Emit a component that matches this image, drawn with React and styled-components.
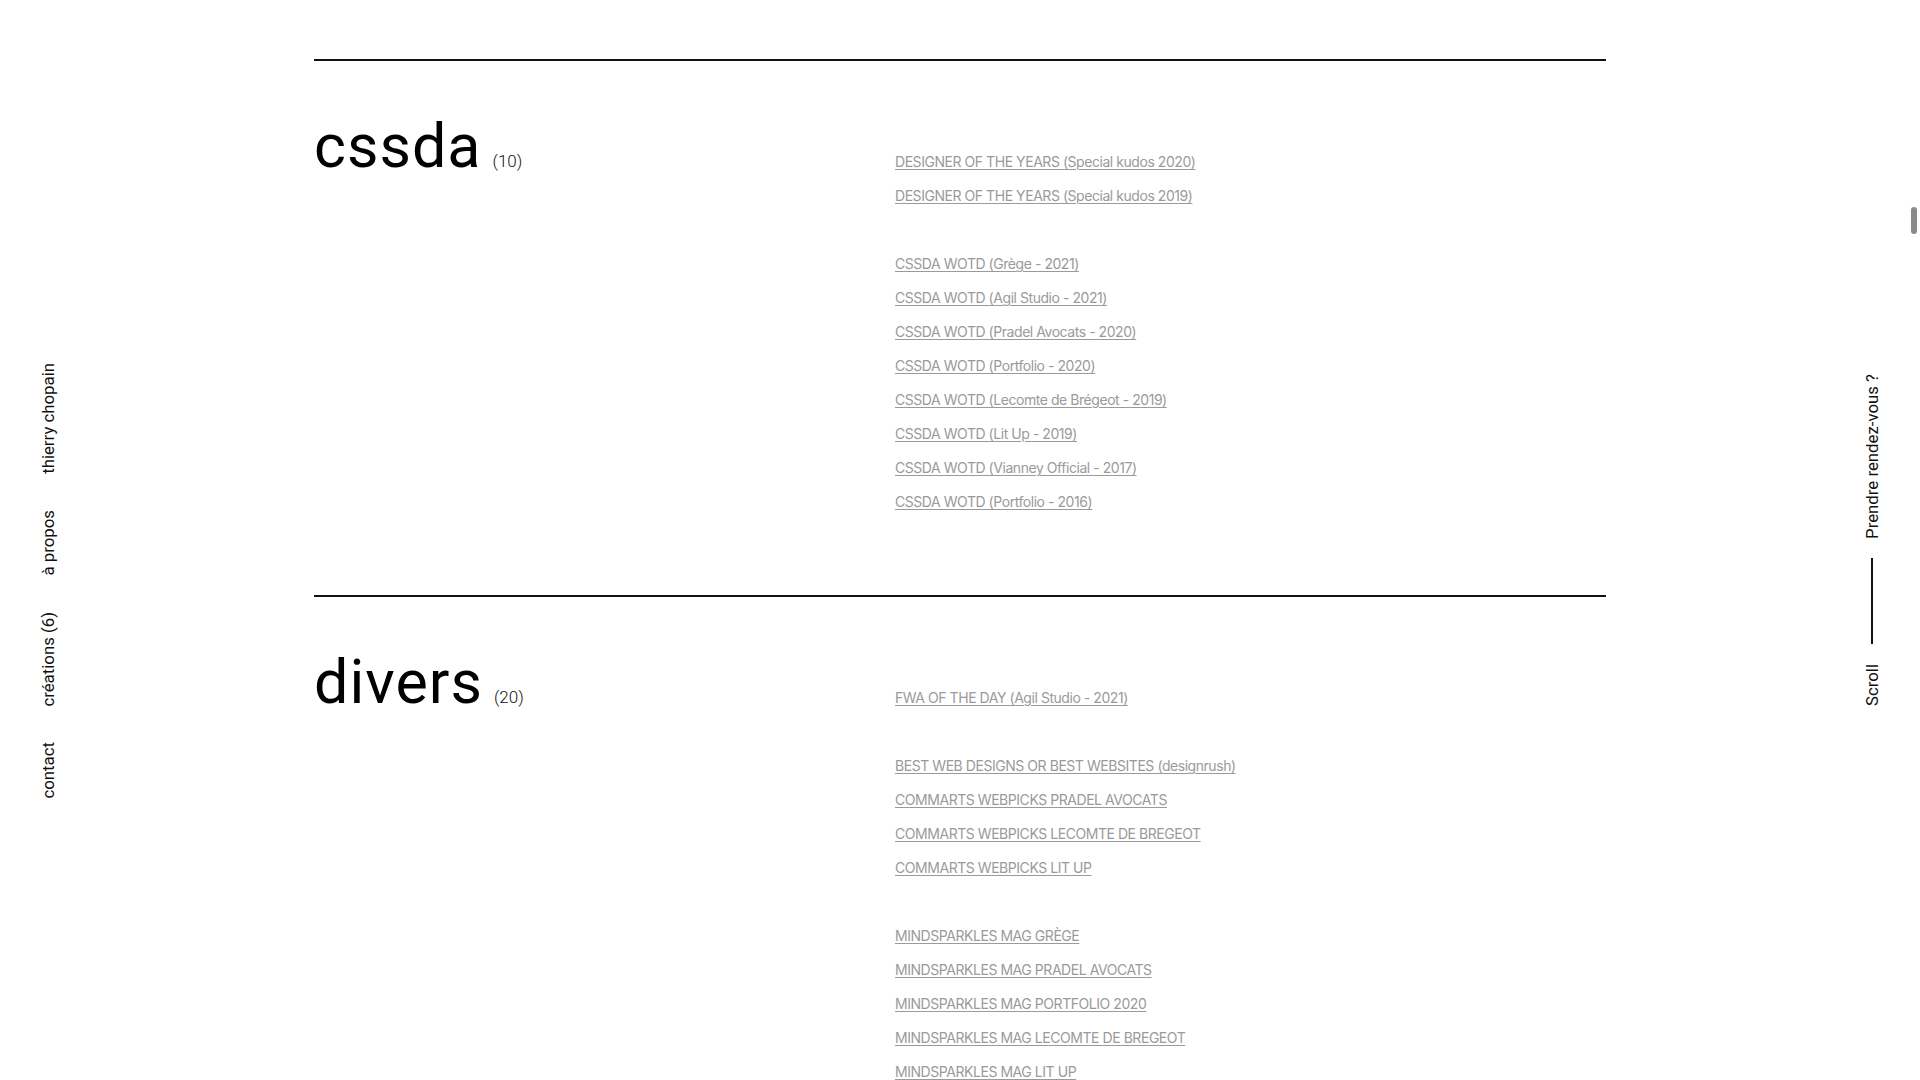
import React from 'react'
import styled, { createGlobalStyle } from 'styled-components'

const GlobalStyle = createGlobalStyle`
  html, body {
    margin: 0;
    padding: 0;
    height: 100%;
    overflow: hidden;
    background: #fff;
  }
  body {
    font-family: Roboto, "Liberation Sans", Arial, sans-serif;
    color: #111;
  }
  #root {
    height: 100%;
  }
`

const sections = [
  {
    title: 'cssda',
    count: 10,
    links: [
      'DESIGNER OF THE YEARS (Special kudos 2020)',
      'DESIGNER OF THE YEARS (Special kudos 2019)',
      null,
      'CSSDA WOTD (Grège - 2021)',
      'CSSDA WOTD (Agil Studio - 2021)',
      'CSSDA WOTD (Pradel Avocats - 2020)',
      'CSSDA WOTD (Portfolio - 2020)',
      'CSSDA WOTD (Lecomte de Brégeot - 2019)',
      'CSSDA WOTD (Lit Up - 2019)',
      'CSSDA WOTD (Vianney Official - 2017)',
      'CSSDA WOTD (Portfolio - 2016)',
    ],
  },
  {
    title: 'divers',
    count: 20,
    links: [
      'FWA OF THE DAY (Agil Studio - 2021)',
      null,
      'BEST WEB DESIGNS OR BEST WEBSITES (designrush)',
      'COMMARTS WEBPICKS PRADEL AVOCATS',
      'COMMARTS WEBPICKS LECOMTE DE BREGEOT',
      'COMMARTS WEBPICKS LIT UP',
      null,
      'MINDSPARKLES MAG GRÈGE',
      'MINDSPARKLES MAG PRADEL AVOCATS',
      'MINDSPARKLES MAG PORTFOLIO 2020',
      'MINDSPARKLES MAG LECOMTE DE BREGEOT',
      'MINDSPARKLES MAG LIT UP',
    ],
  },
]

const Page = styled.div`
  position: relative;
  display: grid;
  grid-template-columns: 96px 1fr 96px;
  height: 100vh;
  overflow: hidden;
`

const SideNav = styled.nav`
  display: flex;
  flex-direction: column;
  align-items: center;
  justify-content: center;
  gap: ${(p) => p.$gap}px;
  padding-top: ${(p) => p.$shift}px;
`

const VerticalText = styled.a`
  writing-mode: vertical-rl;
  transform: rotate(180deg);
  font-family: Roboto, "Liberation Sans", Arial, sans-serif;
  font-size: 16.8px;
  line-height: 18px;
  color: #111;
  text-decoration: none;
  white-space: nowrap;
`

const ScrollLine = styled.span`
  display: block;
  width: 2px;
  height: 86px;
  background: #111;
`

const Main = styled.main`
  overflow: hidden;
`

const Content = styled.div`
  width: 1292px;
  margin: 0 auto;
  padding-top: 59px;
`

const Section = styled.section`
  display: grid;
  grid-template-columns: 581px 1fr;
  align-items: baseline;
  border-top: 2px solid #111;
  padding: 55px 0 76px;
`

const Title = styled.h2`
  margin: 0;
  font-family: Roboto, "Liberation Sans", Arial, sans-serif;
  font-weight: 400;
  font-size: 61px;
  line-height: 60px;
  letter-spacing: 1px;
  color: #000;
`

const Count = styled.span`
  margin-left: 11px;
  font-size: 17px;
  font-weight: 300;
  letter-spacing: 0;
  color: #111;
`

const LinkList = styled.ul`
  list-style: none;
  margin: 0;
  padding: 0;
`

const Item = styled.li`
  height: 34px;
  line-height: 34px;
  font-family: Inter, "Open Sans", sans-serif;
  font-size: 14px;
  letter-spacing: -0.45px;
  white-space: nowrap;
`

const Award = styled.a`
  color: #9a9a9a;
  text-decoration: underline;
  text-decoration-thickness: 1px;
  text-underline-offset: 2px;
`

const ScrollThumb = styled.div`
  position: absolute;
  top: 207px;
  right: 3px;
  width: 6px;
  height: 27px;
  border-radius: 3px;
  background: #8a8a8a;
`

export default function App() {
  return (
    <>
      <GlobalStyle />
      <Page>
        <SideNav $gap={36} $shift={82}>
          <VerticalText href="#">thierry chopain</VerticalText>
          <VerticalText href="#">à propos</VerticalText>
          <VerticalText href="#">créations (6)</VerticalText>
          <VerticalText href="#">contact</VerticalText>
        </SideNav>

        <Main>
          <Content>
            {sections.map((section) => (
              <Section key={section.title}>
                <Title>
                  {section.title}
                  <Count>({section.count})</Count>
                </Title>
                <LinkList>
                  {section.links.map((label, i) => (
                    <Item key={i}>{label && <Award href="#">{label}</Award>}</Item>
                  ))}
                </LinkList>
              </Section>
            ))}
          </Content>
        </Main>

        <SideNav $gap={20} $shift={0}>
          <VerticalText href="#">Prendre rendez-vous ?</VerticalText>
          <ScrollLine />
          <VerticalText as="span">Scroll</VerticalText>
        </SideNav>

        <ScrollThumb />
      </Page>
    </>
  )
}
